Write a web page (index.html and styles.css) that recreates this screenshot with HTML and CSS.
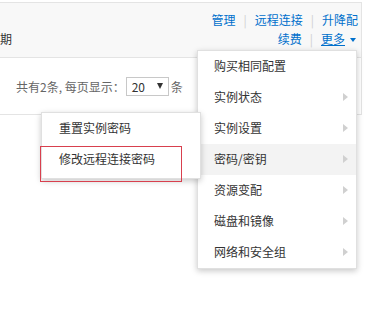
FILE: index.html
```html
<!DOCTYPE html>
<html lang="zh">
<head>
<meta charset="utf-8">
<link rel="stylesheet" href="styles.css">
</head>
<body>
<div class="page">
  <div class="table">
    <div class="thead">
      <div class="col-left">期</div>
      <div class="col-ops">
        <div class="ops-line">
          <a class="link">管理</a><span class="sep">|</span><a class="link">远程连接</a><span class="sep">|</span><a class="link">升降配</a>
        </div>
        <div class="ops-line">
          <a class="link">续费</a><span class="sep">|</span><a class="link more">更多</a><span class="caret"></span>
        </div>
      </div>
    </div>
    <div class="pager">
      <span class="pager-text">共有2条, 每页显示：</span>
      <span class="select"><span class="select-val">20</span><span class="select-arrow"></span></span>
      <span class="pager-text">条</span>
    </div>
  </div>

  <ul class="menu main-menu">
    <li class="item">购买相同配置</li>
    <li class="item sub">实例状态</li>
    <li class="item sub">实例设置</li>
    <li class="item sub active">密码/密钥</li>
    <li class="item sub">资源变配</li>
    <li class="item sub">磁盘和镜像</li>
    <li class="item sub">网络和安全组</li>
  </ul>

  <ul class="menu sub-menu">
    <li class="item">重置实例密码</li>
    <li class="item">修改远程连接密码</li>
  </ul>

  <div class="annot"></div>
</div>
</body>
</html>
```

FILE: styles.css
```css
* { box-sizing: border-box; }
html, body {
  margin: 0;
  padding: 0;
  background: #fff;
}
body {
  font-family: "Noto Sans CJK SC", "Noto Sans", sans-serif;
  font-size: 12px;
  color: #333;
}
.page {
  position: relative;
  width: 370px;
  height: 321px;
  overflow: hidden;
  padding-top: 2px;
}
.table {
  width: 362px;
  border-top: 1px solid #e4e4e4;
  border-right: 1px solid #e4e4e4;
  border-bottom: 1px solid #e4e4e4;
}
.thead {
  height: 55px;
  background: #f8f8f8;
  border-bottom: 1px solid #e4e4e4;
  display: flex;
  justify-content: space-between;
  align-items: center;
}
.col-left {
  padding-top: 17px;
  line-height: 19px;
}
.col-ops {
  display: flex;
  flex-direction: column;
  align-items: flex-end;
  padding-right: 3px;
  margin-top: -2px;
}
.ops-line {
  line-height: 19px;
  display: flex;
  align-items: center;
  white-space: nowrap;
}
.link {
  color: #0070cc;
  text-decoration: none;
}
.link.more {
  text-decoration: underline;
}
.sep {
  color: #d0d0d0;
  margin: 0 8px;
}
.caret {
  display: inline-block;
  width: 0;
  height: 0;
  border-left: 3.5px solid transparent;
  border-right: 3.5px solid transparent;
  border-top: 4px solid #0070cc;
  margin-left: 5px;
  margin-right: 2px;
  margin-top: 2px;
}
.pager {
  height: 56px;
  display: flex;
  align-items: center;
  padding-left: 16px;
  color: #666;
}
.select {
  display: inline-flex;
  align-items: center;
  width: 43px;
  height: 19px;
  border: 1px solid #c8c8c8;
  margin: 0 2px 0 1px;
  padding-left: 5px;
  color: #333;
}
.select-val {
  flex: 1;
  line-height: 17px;
}
.select-arrow {
  width: 0;
  height: 0;
  border-left: 3px solid transparent;
  border-right: 3px solid transparent;
  border-top: 6px solid #333;
  margin-right: 5px;
}
.menu {
  position: absolute;
  margin: 0;
  padding: 0;
  list-style: none;
  background: #fff;
  border: 1px solid #e0e0e0;
  box-shadow: 0 2px 6px rgba(0, 0, 0, 0.22);
}
.main-menu {
  left: 197px;
  top: 50px;
  width: 160px;
}
.sub-menu {
  left: 41px;
  top: 112px;
  width: 160px;
  padding: 0 0 3px;
}
.item {
  height: 31px;
  line-height: 29px;
  padding: 0 0 2px 16px;
  position: relative;
  color: #333;
  white-space: nowrap;
}
.sub-menu .item {
  padding-left: 17px;
}
.item.active {
  background: #f3f3f3;
}
.item.sub::after {
  content: "";
  position: absolute;
  right: 8px;
  top: 11px;
  width: 0;
  height: 0;
  border-top: 4.5px solid transparent;
  border-bottom: 4.5px solid transparent;
  border-left: 5px solid #d0d0d0;
}
.annot {
  position: absolute;
  left: 40px;
  top: 146px;
  width: 142px;
  height: 36px;
  border: 1px solid #d8404e;
}
```
